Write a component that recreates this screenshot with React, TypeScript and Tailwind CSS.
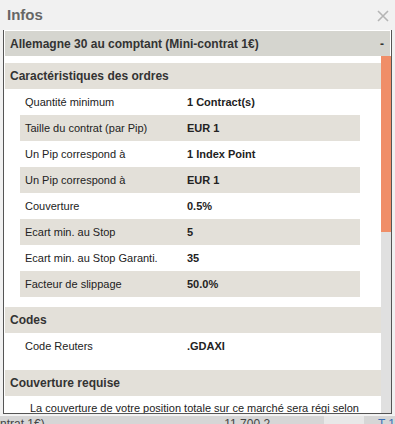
import React from "react";

const rows: [string, string][] = [
  ["Quantité minimum", "1 Contract(s)"],
  ["Taille du contrat (par Pip)", "EUR 1"],
  ["Un Pip correspond à", "1 Index Point"],
  ["Un Pip correspond à", "EUR 1"],
  ["Couverture", "0.5%"],
  ["Ecart min. au Stop", "5"],
  ["Ecart min. au Stop Garanti.", "35"],
  ["Facteur de slippage", "50.0%"],
];

function Row({ label, value, alt }: { label: string; value: string; alt: boolean }) {
  return (
    <div className={`flex h-[26px] items-center text-[11px] ${alt ? "bg-[#e3e0d9]" : ""}`}>
      <div className="w-[167px] pl-[5px] text-[#222]">{label}</div>
      <div className="font-bold text-[#222]">{value}</div>
    </div>
  );
}

function SectionHeader({ children }: { children: React.ReactNode }) {
  return (
    <div className="flex h-[26px] items-center bg-[#e3e0d9] pl-[5px] text-[12px] font-bold text-[#333]">
      {children}
    </div>
  );
}

export default function App() {
  return (
    <div
      className="relative h-[424px] w-[395px] overflow-hidden bg-[#f1f1f1]"
      style={{ fontFamily: '"Liberation Sans", Arial, sans-serif' }}
    >
      <div className="flex h-[30px] items-center justify-between pl-[7px] pr-[6px]">
        <span className="text-[15px] font-bold text-[#666]">Infos</span>
        <svg width="12" height="12" viewBox="0 0 12 12" className="mt-[1px]">
          <path d="M1 1 L11 11 M11 1 L1 11" stroke="#b5b5b5" strokeWidth="1.6" />
        </svg>
      </div>
      <div className="ml-[3px] flex h-[384px] w-[389px] flex-col overflow-hidden border-x border-b border-x-[#555] border-b-[#555] bg-white pt-[1px]">
        <div className="mx-[1px] flex h-[25px] shrink-0 items-center justify-between bg-[#d5d5cf] pl-[5px] pr-[6px] text-[12px] font-bold text-[#333]">
          <span>Allemagne 30 au comptant (Mini-contrat 1€)</span>
          <span>-</span>
        </div>
        <div className="ml-[1px] flex min-h-0 flex-1">
          <div className="min-w-0 flex-1 overflow-hidden">
            <div className="mt-[7px]">
              <SectionHeader>Caractéristiques des ordres</SectionHeader>
              <div className="w-[355px] pl-[15px]">
                {rows.map((r, i) => (
                  <Row key={i} label={r[0]} value={r[1]} alt={i % 2 === 1} />
                ))}
              </div>
            </div>
            <div className="mt-[10px]">
              <SectionHeader>Codes</SectionHeader>
              <div className="w-[355px] pl-[15px]">
                <Row label="Code Reuters" value=".GDAXI" alt={false} />
              </div>
            </div>
            <div className="mt-[11px]">
              <SectionHeader>Couverture requise</SectionHeader>
              <div className="whitespace-nowrap pl-[25px] pt-[5px] text-[11px] leading-[14px] text-[#222]">
                La couverture de votre position totale sur ce marché sera régi selon
              </div>
            </div>
          </div>
          <div className="flex w-[10px] shrink-0 flex-col bg-[#e0e0e0]">
            <div className="h-[176px] bg-[#f08e68]" />
          </div>
        </div>
      </div>
      <div className="mt-[1px] h-[10px] overflow-hidden border-t border-[#f4f4f4] bg-[#d6d6d6] text-[12px] leading-[16px] text-[#444]">
        <div className="flex whitespace-nowrap">
          <span className="w-[225px]">ntrat 1€)</span>
          <span className="w-[100px]">11 700.2</span>
          <span className="h-[20px] w-[40px] bg-[#e8e8e8]" />
          <span className="ml-[14px] text-[#3b6fb6]">T 1</span>
        </div>
      </div>
    </div>
  );
}
